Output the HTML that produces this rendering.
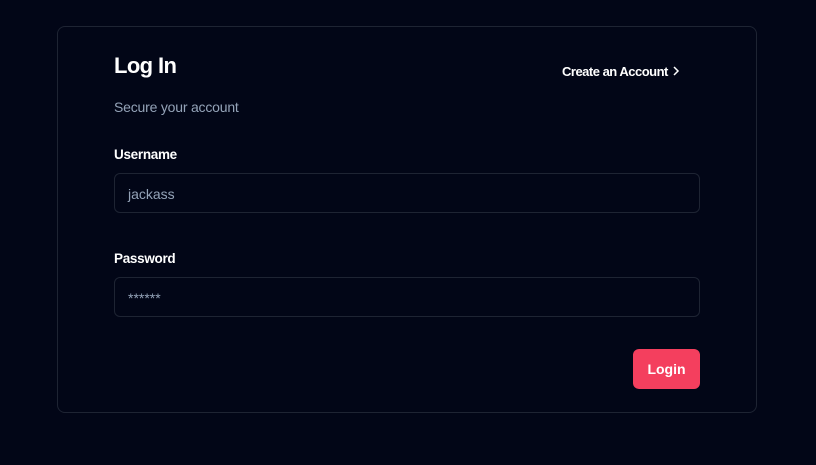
<!DOCTYPE html>
<html><head><style>
*{box-sizing:border-box;margin:0;padding:0}
body{width:816px;height:465px;background:#020617;font-family:"Liberation Sans",sans-serif;position:relative;overflow:hidden;color:#fff}
.card{position:absolute;left:57px;top:26px;width:700px;height:387px;border:1px solid #1e2433;border-radius:8px}
.abs{position:absolute}
h1{position:absolute;left:114px;top:53px;font-size:22px;font-weight:bold;letter-spacing:-0.6px}
.sub{left:114px;top:99px;font-size:14px;color:#94a3b8;letter-spacing:-0.2px}
.link{left:562px;top:64px;font-size:13px;font-weight:bold;letter-spacing:-0.5px}
.lbl{left:114px;font-size:13.5px;font-weight:bold;letter-spacing:-0.3px}
.inp{left:114px;width:586px;height:40px;border:1px solid #1e2433;border-radius:6px;font-size:14px;color:#94a3b8;padding:12px 13px}
.btn{left:633px;top:349px;width:67px;height:40px;background:#f43f5e;border-radius:6px;font-size:14px;font-weight:bold;text-align:center;line-height:40px}
</style></head><body>
<div class="card"></div>
<h1>Log In</h1>
<div class="abs sub">Secure your account</div>
<div class="abs link">Create an Account <svg width="8" height="10" viewBox="0 0 8 10" style="margin-left:1px"><path d="M2 1l4 4-4 4" stroke="#fff" stroke-width="1.5" fill="none"/></svg></div>
<div class="abs lbl" style="top:147px">Username</div>
<div class="abs inp" style="top:173px">jackass</div>
<div class="abs lbl" style="top:251px">Password</div>
<div class="abs inp" style="top:277px">******</div>
<div class="abs btn">Login</div>
</body></html>
